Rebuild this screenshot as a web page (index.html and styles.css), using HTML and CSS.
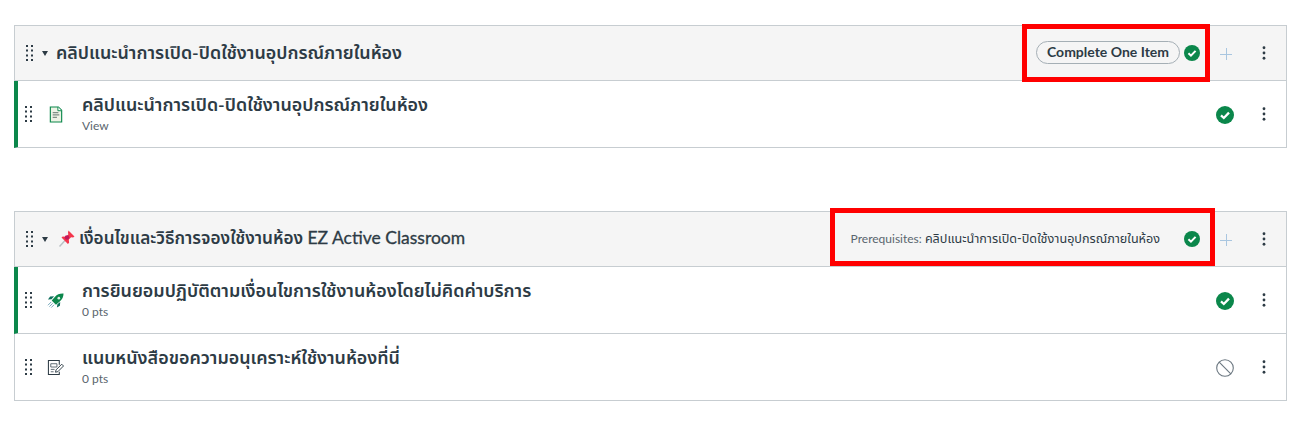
FILE: index.html
```html
<!DOCTYPE html>
<html lang="en">
<head>
    <meta charset="UTF-8">
    <meta name="viewport" content="width=device-width, initial-scale=1.0">
    <title>Modules</title>
    <link rel="stylesheet" href="styles.css">
</head>
<body>
    <svg class="icon-defs" width="0" height="0">
        <symbol id="drag" viewBox="0 0 7 16">
            <g fill="#2d3b45">
                <rect x="0" y="0" width="2" height="2"/><rect x="5" y="0" width="2" height="2"/>
                <rect x="0" y="4.500" width="2" height="2"/><rect x="5" y="4.500" width="2" height="2"/>
                <rect x="0" y="9.500" width="2" height="2"/><rect x="5" y="9.500" width="2" height="2"/>
                <rect x="0" y="14" width="2" height="2"/><rect x="5" y="14" width="2" height="2"/>
            </g>
        </symbol>
        <symbol id="dots" viewBox="0 0 4 16">
            <circle cx="2" cy="2" r="1.600" fill="#2d3b45"/>
            <circle cx="2" cy="8" r="1.600" fill="#2d3b45"/>
            <circle cx="2" cy="14" r="1.600" fill="#2d3b45"/>
        </symbol>
        <symbol id="check" viewBox="0 0 18 18">
            <circle cx="9" cy="9" r="9" fill="#0b874b"/>
            <path d="M5 9.400l2.800 2.600L13 6.600" fill="none" stroke="#fff" stroke-width="2.300"/>
        </symbol>
    </svg>

    <section class="module">
        <header class="module-head">
            <svg class="drag"><use href="#drag"/></svg>
            <span class="caret"></span>
            <h2>คลิปแนะนำการเปิด-ปิดใช้งานอุปกรณ์ภายในห้อง</h2>
            <div class="head-right">
                <span class="pill">Complete One Item</span>
                <svg class="check-sm"><use href="#check"/></svg>
                <span class="plus"></span>
                <svg class="dots"><use href="#dots"/></svg>
            </div>
            <div class="mark mark-one"></div>
        </header>
        <div class="item done">
            <svg class="drag"><use href="#drag"/></svg>
            <svg class="type-icon" viewBox="0 0 16 18">
                <path d="M2 1h8.500L14 4.500V17H2z" fill="#eef3e6" stroke="#0b874b" stroke-width="1.200"/>
                <path d="M10 1v4h4" fill="#fff" stroke="#0b874b" stroke-width="1"/>
                <path d="M4.500 7h6M4.500 9.500h7M4.500 12h4.500" stroke="#7f8f86" stroke-width="1.300"/>
            </svg>
            <div class="item-text">
                <h3>คลิปแนะนำการเปิด-ปิดใช้งานอุปกรณ์ภายในห้อง</h3>
                <p>View</p>
            </div>
            <svg class="check"><use href="#check"/></svg>
            <svg class="dots"><use href="#dots"/></svg>
        </div>
    </section>

    <section class="module">
        <header class="module-head">
            <svg class="drag"><use href="#drag"/></svg>
            <span class="caret"></span>
            <svg class="pin" viewBox="0 0 16 17">
                <path d="M0.500 16.500l5.500-6" stroke="#b9c0c4" stroke-width="1.500"/>
                <path d="M9.500 0.500l6 6-1.400 1-2-.3-2.300 2.400.3 3.200-1.200 1.200-6.400-6.400 1.200-1.200 3.200.3 2.400-2.300-.3-2z" fill="#f4364c"/>
                <circle cx="8" cy="7.500" r="2.300" fill="#c2185b"/>
            </svg>
            <h2 class="title-mixed">เงื่อนไขและวิธีการจองใช้งานห้อง <span class="latin">EZ Active Classroom</span></h2>
            <div class="head-right">
                <span class="prereq">Prerequisites: <span class="prereq-name">คลิปแนะนำการเปิด-ปิดใช้งานอุปกรณ์ภายในห้อง</span></span>
                <svg class="check-sm"><use href="#check"/></svg>
                <span class="plus"></span>
                <svg class="dots"><use href="#dots"/></svg>
            </div>
            <div class="mark mark-two"></div>
        </header>
        <div class="item done">
            <svg class="drag"><use href="#drag"/></svg>
            <svg class="type-icon type-wide" viewBox="0 0 18 16">
                <path d="M17.500 0.500c-4-.2-6.800 1-9 3.400L5 8l4.500 4.500 4-3.500c2.600-2.300 4-5 4-8.500z" fill="#0b874b"/>
                <circle cx="12.500" cy="5.500" r="1.400" fill="#dff0e6"/>
                <path d="M7.500 3.500L3.300 3.700 1 7l3.800-.4zM14 9.500l-.3 4-3.200 2 .5-3.500z" fill="#0e6f5c"/>
                <path d="M4.500 9.500L1 13M6 11L2.500 14.500M7.500 12.500L4.500 15.500" stroke="#6fa3b8" stroke-width="1"/>
            </svg>
            <div class="item-text">
                <h3>การยินยอมปฏิบัติตามเงื่อนไขการใช้งานห้องโดยไม่คิดค่าบริการ</h3>
                <p>0 pts</p>
            </div>
            <svg class="check"><use href="#check"/></svg>
            <svg class="dots"><use href="#dots"/></svg>
        </div>
        <div class="item">
            <svg class="drag"><use href="#drag"/></svg>
            <svg class="type-icon type-wide" viewBox="0 0 18 18">
                <path d="M13 6V1.500H1.500v15H13v-3" fill="none" stroke="#2d3b45" stroke-width="1.100"/>
                <path d="M4 5h6.500v3.500H4zM4 11h4M4 13.500h3" fill="none" stroke="#59656e" stroke-width="1"/>
                <path d="M9 14l.6-2.500 6-6 1.900 1.900-6 6z" fill="#fff" stroke="#2d3b45" stroke-width="1"/>
            </svg>
            <div class="item-text">
                <h3>แนบหนังสือขอความอนุเคราะห์ใช้งานห้องที่นี่</h3>
                <p>0 pts</p>
            </div>
            <svg class="check" viewBox="0 0 18 18">
                <circle cx="9" cy="9" r="8.300" fill="none" stroke="#6b7780" stroke-width="1.100"/>
                <path d="M3.200 3.200l11.600 11.600" stroke="#6b7780" stroke-width="1.100"/>
            </svg>
            <svg class="dots"><use href="#dots"/></svg>
        </div>
    </section>
</body>
</html>
```

FILE: styles.css
```css
body {
    margin: 0;
    padding: 25px 28px 0 14px;
    background: #fff;
    color: #2d3b45;
    font-family: Lato, "Noto Sans", "Noto Sans Thai", sans-serif;
}
.icon-defs {
    position: absolute;
}
.module {
    border: 1px solid #c7cdd1;
    border-bottom: 0;
    margin-bottom: 63px;
}
.module:last-child {
    margin-bottom: 0;
}
.module-head {
    position: relative;
    display: flex;
    align-items: center;
    height: 54px;
    padding-left: 11px;
    background: #f5f5f5;
    border-bottom: 1px solid #c7cdd1;
}
.module-head h2 {
    margin: 0 0 2px;
    font-size: 17.9px;
    line-height: 24px;
    font-weight: 600;
}
.module-head .title-mixed {
    font-size: 17.2px;
}
.module-head .latin {
    font-size: 17.5px;
    font-weight: 400;
    -webkit-text-stroke: 0.3px #2d3b45;
}
.drag {
    width: 7px;
    height: 16px;
    flex: none;
}
.caret {
    width: 0;
    height: 0;
    margin: 0 8px 0 9px;
    border-left: 3.5px solid transparent;
    border-right: 3.5px solid transparent;
    border-top: 5px solid #2d3b45;
}
.pin {
    width: 16px;
    height: 17px;
    margin: -2px 4px 0 3px;
}
.head-right {
    margin-left: auto;
    display: flex;
    align-items: center;
}
.pill {
    border: 1px solid #a5afb5;
    border-radius: 12px;
    background: #f5f5f5;
    height: 21px;
    line-height: 19px;
    padding: 0 10px;
    font-size: 14px;
    font-weight: bold;
    margin-bottom: 1px;
}
.prereq {
    font-size: 12px;
    margin-right: 20px;
    color: #59656e;
}
.prereq-name {
    font-size: 12.6px;
    color: #2d3b45;
}
.check-sm {
    width: 16px;
    height: 16px;
    margin-left: 4px;
}
.plus {
    width: 12px;
    height: 12px;
    margin: 2px 30px 0 20px;
    background:
        linear-gradient(#a9c6e0, #a9c6e0) center / 100% 1px no-repeat,
        linear-gradient(#a9c6e0, #a9c6e0) center / 1px 100% no-repeat;
}
.dots {
    width: 4px;
    height: 14px;
    margin-right: 20px;
}
.mark {
    position: absolute;
    border: 5px solid #f00;
    box-sizing: border-box;
}
.mark-one {
    top: -2px;
    left: 1007px;
    width: 188px;
    height: 58px;
}
.mark-two {
    top: -4px;
    left: 815px;
    width: 385px;
    height: 58px;
}
.item {
    display: flex;
    align-items: center;
    height: 66px;
    padding-left: 10px;
    border-bottom: 1px solid #c7cdd1;
}
.item.done {
    padding-left: 7px;
    border-left: 4px solid #0b874b;
    margin-left: -1px;
}
.type-icon {
    width: 16px;
    height: 17px;
    margin: 0 18px 0 16px;
    flex: none;
}
.type-wide {
    width: 17px;
    margin: 0 18px 0 15px;
}
.item-text {
    flex: 1;
    padding-bottom: 2px;
}
.item-text h3 {
    margin: 0;
    font-size: 17.9px;
    line-height: 22px;
    font-weight: 600;
}
.item-text p {
    margin: 3px 0 0;
    font-size: 12px;
    line-height: 16px;
    color: #59656e;
}
.check {
    width: 18px;
    height: 18px;
    margin: 2px 28px 0 0;
}
```
